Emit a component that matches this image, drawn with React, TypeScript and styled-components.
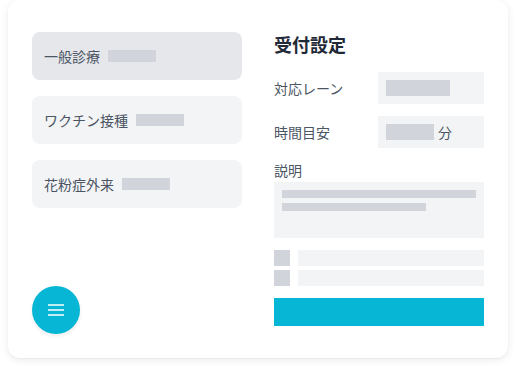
import React from "react";
import styled, { createGlobalStyle } from "styled-components";

const Global = createGlobalStyle`
  html, body { margin: 0; padding: 0; background: #ffffff; }
  body {
    font-family: "Noto Sans CJK JP", "Noto Sans", sans-serif;
    -webkit-font-smoothing: antialiased;
  }
  * { box-sizing: border-box; }
`;

const Page = styled.div`
  padding: 0 8px 8px;
  width: 516px;
  height: 366px;
  overflow: hidden;
`;

const Card = styled.div`
  width: 500px;
  height: 358px;
  background: #ffffff;
  border-radius: 12px;
  box-shadow: 0 2px 8px rgba(0, 0, 0, 0.08), 0 1px 2px rgba(0, 0, 0, 0.04);
  padding: 32px 24px 24px;
  display: grid;
  grid-template-columns: 210px 210px;
  column-gap: 32px;
`;

const LeftCol = styled.div`
  display: flex;
  flex-direction: column;
`;

const List = styled.div`
  display: flex;
  flex-direction: column;
  gap: 16px;
`;

const Item = styled.div<{ $active?: boolean }>`
  height: 48px;
  border-radius: 8px;
  background: ${(p) => (p.$active ? "#e5e7eb" : "#f3f4f6")};
  display: flex;
  align-items: center;
  gap: 8px;
  padding: 0 12px;
  font-size: 14px;
  color: #4b5563;
`;

const Bar = styled.span<{ $w: number; $h?: number }>`
  display: block;
  width: ${(p) => p.$w}px;
  height: ${(p) => p.$h ?? 12}px;
  background: #d1d5db;
  flex: none;
`;

const Fab = styled.button`
  margin-top: auto;
  width: 48px;
  height: 48px;
  border-radius: 50%;
  border: none;
  background: #06b6d4;
  display: flex;
  align-items: center;
  justify-content: center;
  padding: 0;
  box-shadow: 0 2px 4px rgba(0, 0, 0, 0.08);
`;

const RightCol = styled.div`
  display: flex;
  flex-direction: column;
`;

const Title = styled.h2`
  margin: 0 0 16px;
  font-size: 18px;
  line-height: 24px;
  font-weight: 700;
  color: #1f2937;
`;

const FieldRow = styled.div`
  display: flex;
  align-items: center;
  margin-bottom: 12px;
`;

const Label = styled.div`
  width: 104px;
  font-size: 14px;
  color: #4b5563;
`;

const InputBox = styled.div`
  flex: 1;
  height: 32px;
  background: #f3f4f6;
  display: flex;
  align-items: center;
  gap: 4px;
  padding: 0 8px;
  font-size: 14px;
  color: #4b5563;
`;

const BlockLabel = styled.div`
  font-size: 14px;
  line-height: 20px;
  color: #4b5563;
  margin-bottom: 2px;
`;

const TextArea = styled.div`
  height: 56px;
  background: #f3f4f6;
  padding: 8px;
  display: flex;
  flex-direction: column;
  gap: 5px;
  margin-bottom: 12px;
`;

const CheckRow = styled.div`
  display: flex;
  gap: 8px;
  margin-bottom: 4px;
`;

const Box = styled.span`
  width: 16px;
  height: 16px;
  background: #d1d5db;
  flex: none;
`;

const CheckBar = styled.span`
  flex: 1;
  height: 16px;
  background: #f3f4f6;
`;

const Submit = styled.div`
  margin-top: 8px;
  height: 28px;
  background: #06b6d4;
`;

const MenuIcon = () => (
  <svg width="18" height="18" viewBox="0 0 18 18" fill="none">
    <path d="M1 4h16M1 9h16M1 14h16" stroke="#ffffff" strokeWidth="1.6" />
  </svg>
);

export default function App() {
  return (
    <>
      <Global />
      <Page>
        <Card>
          <LeftCol>
            <List>
              <Item $active>
                一般診療
                <Bar $w={48} />
              </Item>
              <Item>
                ワクチン接種
                <Bar $w={48} />
              </Item>
              <Item>
                花粉症外来
                <Bar $w={48} />
              </Item>
            </List>
            <Fab aria-label="menu">
              <MenuIcon />
            </Fab>
          </LeftCol>
          <RightCol>
            <Title>受付設定</Title>
            <FieldRow>
              <Label>対応レーン</Label>
              <InputBox>
                <Bar $w={64} $h={16} />
              </InputBox>
            </FieldRow>
            <FieldRow>
              <Label>時間目安</Label>
              <InputBox>
                <Bar $w={48} $h={16} />
                分
              </InputBox>
            </FieldRow>
            <BlockLabel>説明</BlockLabel>
            <TextArea>
              <Bar $w={194} $h={8} />
              <Bar $w={144} $h={8} />
            </TextArea>
            <CheckRow>
              <Box />
              <CheckBar />
            </CheckRow>
            <CheckRow>
              <Box />
              <CheckBar />
            </CheckRow>
            <Submit />
          </RightCol>
        </Card>
      </Page>
    </>
  );
}
